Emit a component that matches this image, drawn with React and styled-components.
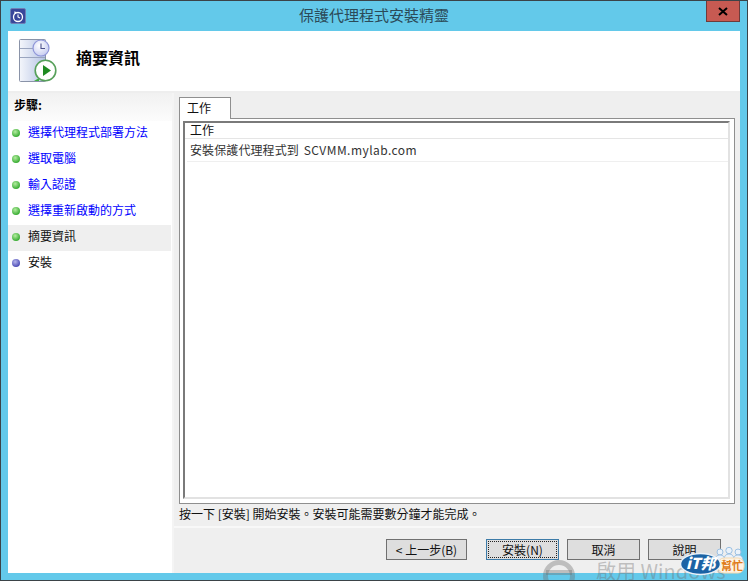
import React from 'react';
import styled, { createGlobalStyle } from 'styled-components';

const Global = createGlobalStyle`
  html, body { margin: 0; padding: 0; background: #63c9ea; }
  #root { width: 748px; height: 581px; overflow: hidden; }
  * { box-sizing: border-box; }
`;

const FONT = `"Noto Sans CJK TC", "Liberation Sans", sans-serif`;

const Win = styled.div`
  position: relative; width: 748px; height: 581px; overflow: hidden;
  display: flex; flex-direction: column;
  background: #63c9ea; border: 1px solid #3b4348;
  font-family: "Liberation Sans", "Noto Sans CJK TC", sans-serif; font-size: 12px; color: #111;
`;
const TitleBar = styled.div`
  height: 30px; flex: none; position: relative; display: flex; align-items: center; padding: 0 0 0 9px;
`;
const TitleText = styled.div`
  position: absolute; left: 0; right: 0; top: 4px; text-align: center;
  font: 15px/20px ${FONT}; color: #2b4a58;
`;
const CloseBtn = styled.div`
  position: absolute; right: 7px; top: 0; width: 34px; height: 21px;
  background: #c75a52; border: 1px solid #6e3b3b; border-top: 0;
  display: flex; align-items: center; justify-content: center;
`;
const Client = styled.div`
  margin: 0 7px 7px; flex: 1; display: flex; flex-direction: column; background: #efefef; min-height: 0;
`;
const Header = styled.div`
  height: 62px; flex: none; background: #fff; border-bottom: 2px solid #eeeeee;
  display: flex; align-items: flex-start; padding: 8px 0 0 11px; gap: 19px;
`;
const HeaderTitle = styled.div`
  font: 700 16px/20px ${FONT}; color: #000; margin-top: 8px;
`;
const Body = styled.div`flex: 1; display: flex; min-height: 0;`;
const Side = styled.div`
  width: 166px; flex: none; background: #fff; border-right: 2px solid #f4f4f4;
`;
const SideHead = styled.div`
  height: 28px; padding: 4px 0 0 6px; background: linear-gradient(#f1f1f1, #fcfcfc);
  font: 700 12px/16px ${FONT}; color: #000;
`;
const Steps = styled.div`display: flex; flex-direction: column; width: 163px;`;
const Step = styled.div`
  height: 26px; display: flex; align-items: center; padding: 0 0 2px 4px; gap: 8px;
  background: ${p => (p.$active ? '#efefef' : 'transparent')};
  color: ${p => (p.$link ? '#0000ff' : '#111')};
  font: 12px/16px ${FONT};
`;
const StepLabel = styled.span`margin-bottom: 2px;`;
const Dot = styled.span`
  width: 8px; height: 8px; border-radius: 50%; flex: none;
  background: ${p => p.$blue
    ? 'radial-gradient(circle at 40% 35%, #b5b5ec, #5050b8 70%)'
    : 'radial-gradient(circle at 40% 35%, #b4eda0, #3cae36 70%)'};
`;
const Main = styled.div`flex: 1; min-width: 0; display: flex; flex-direction: column; padding: 4px 5px 0 5px;`;
const Tab = styled.div`
  width: 52px; height: 22px; flex: none; background: #fff; border: 1px solid #8f8f8f; border-bottom: 0;
  padding-left: 7px; font: 12px/19px ${FONT}; color: #111; position: relative; z-index: 1; margin-bottom: -1px;
`;
const TabPanel = styled.div`
  height: 386px; flex: none; background: #fff; border: 1px solid #8f8f8f; padding: 2px 4px 4px 3px;
`;
const ListBox = styled.div`
  height: 100%; border: 2px solid #7a7a7a; border-right-color: #e2e2e2; border-bottom-color: #e2e2e2; background: #fff;
`;
const ListHead = styled.div`
  height: 16px; padding-left: 5px; border-bottom: 1px solid #e5e5e5; font: 12px/13px ${FONT}; color: #111;
`;
const ListRow = styled.div`
  height: 23px; margin-left: 2px; padding-left: 3px; border-bottom: 1px solid #efefef;
  font: 12px/21px ${FONT}; color: #333; letter-spacing: 0.1px;
`;
const Host = styled.span`letter-spacing: 0.45px; margin-left: 2px;`;
const Hint = styled.div`
  height: 22px; padding-top: 1px; font: 12px/17px ${FONT}; color: #111; white-space: nowrap;
`;
const Footer = styled.div`
  margin: 0 -5px; flex: 1; border-top: 2px solid #f8f8f8; display: flex; justify-content: flex-end;
  padding: 11px 19px 0 0; gap: 8px; align-items: flex-start;
`;
const Btn = styled.div`
  width: ${p => (p.$wide ? '81px' : '73px')}; margin-right: ${p => (p.$wide ? '11px' : '0')};
  height: 21px; background: #dedede; border: 1px solid ${p => (p.$focus ? '#3d7ba8' : '#707070')};
  display: flex; align-items: center; justify-content: center; font: 12px/16px ${FONT}; color: #111; position: relative;
  ${p => p.$focus && `
    &::after { content: ''; position: absolute; inset: 1px; border: 1px dotted #222; }
  `}
`;
const Watermark = styled.div`
  position: absolute; left: 595px; top: 557px; font: 20px/26px ${FONT}; color: rgba(110,110,110,.38);
  white-space: nowrap; z-index: 2;
`;
const WaterIcon = styled.svg`position: absolute; left: 540px; top: 558px; z-index: 2;`;
const LogoWrap = styled.div`
  position: absolute; left: 679px; top: 545px; width: 65px; height: 30px; z-index: 3;
`;
const LogoArt = styled.svg`position: absolute; left: 0; top: 0;`;
const LogoIt = styled.div`
  position: absolute; left: 6px; top: 9px; color: #fff; font: italic 900 15px/16px ${FONT}; white-space: nowrap;
`;
const LogoHelp = styled.div`
  position: absolute; left: 41px; top: 13px; color: #e07b17; font: 700 11px/13px ${FONT}; white-space: nowrap;
`;

const TitleIcon = () => (
  <svg width="16" height="16" viewBox="0 0 16 16">
    <rect x="0.5" y="0.5" width="15" height="15" rx="1.5" fill="#39479a" stroke="#6f7fb5" />
    <circle cx="8" cy="9" r="4.5" fill="none" stroke="#fff" strokeWidth="1.3" />
    <path d="M8 6.5V9l2 1" fill="none" stroke="#fff" strokeWidth="1.1" />
    <path d="M4 3.5l3 .5-2 2z" fill="#fff" />
  </svg>
);

const WizardIcon = () => (
  <svg width="38" height="44" viewBox="0 0 38 44" style={{ flex: 'none' }}>
    <defs>
      <linearGradient id="srv" x1="0" x2="1" y1="0" y2="0">
        <stop offset="0" stopColor="#f4f6fb" />
        <stop offset="1" stopColor="#b4c2e4" />
      </linearGradient>
      <radialGradient id="clk" cx="0.4" cy="0.35" r="0.8">
        <stop offset="0" stopColor="#ffffff" />
        <stop offset="1" stopColor="#bcc3ee" />
      </radialGradient>
    </defs>
    <rect x="0.5" y="0.5" width="26" height="42" rx="1" fill="url(#srv)" stroke="#8a93a8" />
    <line x1="1" y1="9.5" x2="26" y2="9.5" stroke="#9aa5bf" />
    <line x1="1" y1="18.5" x2="26" y2="18.5" stroke="#9aa5bf" />
    <circle cx="22" cy="9" r="8" fill="url(#clk)" stroke="#8f96d8" strokeWidth="1.2" />
    <path d="M22 4.5v5h4" fill="none" stroke="#4b4f8a" strokeWidth="1.1" />
    <path d="M15 42h5v-3z" fill="#3eb03e" />
    <circle cx="26.5" cy="31.5" r="10.3" fill="#fff" stroke="#57a05a" strokeWidth="1.6" />
    <path d="M24 26l8 5.5-8 5.5z" fill="#1f8a22" />
  </svg>
);

const steps = ['選擇代理程式部署方法', '選取電腦', '輸入認證', '選擇重新啟動的方式'];

export default function App() {
  return (
    <>
      <Global />
      <Win>
        <TitleBar>
          <TitleIcon />
          <TitleText>保護代理程式安裝精靈</TitleText>
          <CloseBtn>
            <svg width="10" height="9" viewBox="0 0 10 9">
              <path d="M1 1l8 7M9 1L1 8" stroke="#000" strokeWidth="2" />
            </svg>
          </CloseBtn>
        </TitleBar>
        <Client>
          <Header>
            <WizardIcon />
            <HeaderTitle>摘要資訊</HeaderTitle>
          </Header>
          <Body>
            <Side>
              <SideHead>步驟:</SideHead>
              <Steps>
                {steps.map(t => (
                  <Step key={t} $link><Dot /><StepLabel>{t}</StepLabel></Step>
                ))}
                <Step $active><Dot /><StepLabel>摘要資訊</StepLabel></Step>
                <Step><Dot $blue /><StepLabel>安裝</StepLabel></Step>
              </Steps>
            </Side>
            <Main>
              <Tab>工作</Tab>
              <TabPanel>
                <ListBox>
                  <ListHead>工作</ListHead>
                  <ListRow>安裝保護代理程式到 <Host>SCVMM.mylab.com</Host></ListRow>
                </ListBox>
              </TabPanel>
              <Hint>按一下 [安裝] 開始安裝。安裝可能需要數分鐘才能完成。</Hint>
              <Footer>
                <Btn $wide>&lt; 上一步(B)</Btn>
                <Btn $focus>安裝(N)</Btn>
                <Btn>取消</Btn>
                <Btn>說明</Btn>
              </Footer>
            </Main>
          </Body>
        </Client>
        <WaterIcon width="36" height="23" viewBox="0 0 36 23">
          <circle cx="18" cy="17" r="13.5" fill="none" stroke="rgba(110,110,110,.38)" strokeWidth="5" />
          <rect x="5" y="11" width="26" height="5" fill="rgba(110,110,110,.38)" />
        </WaterIcon>
        <Watermark>啟用 Windows</Watermark>
        <LogoWrap>
          <LogoArt width="65" height="30" viewBox="0 0 65 30">
            <g fill="#eaf2fa" stroke="#9cc0e2">
              <circle cx="40" cy="6" r="3" />
              <circle cx="49" cy="4.5" r="3.2" />
              <circle cx="58" cy="6" r="3" />
              <path d="M35 15c0-4 2-6 5-6s5 2 5 6zM44 14c0-4 2-6 5-6s5 2 5 6zM53 15c0-4 2-6 5-6s5 2 5 6z" />
            </g>
            <rect x="38" y="12" width="26" height="15" rx="6" fill="#fdf3e4" stroke="#f6d9ae" />
            <ellipse cx="20.5" cy="18" rx="20" ry="10.5" fill="#1b63a5" stroke="#e9f1f8" strokeWidth="1.5" />
          </LogoArt>
          <LogoIt>iT邦</LogoIt>
          <LogoHelp>幫忙</LogoHelp>
        </LogoWrap>
      </Win>
    </>
  );
}
